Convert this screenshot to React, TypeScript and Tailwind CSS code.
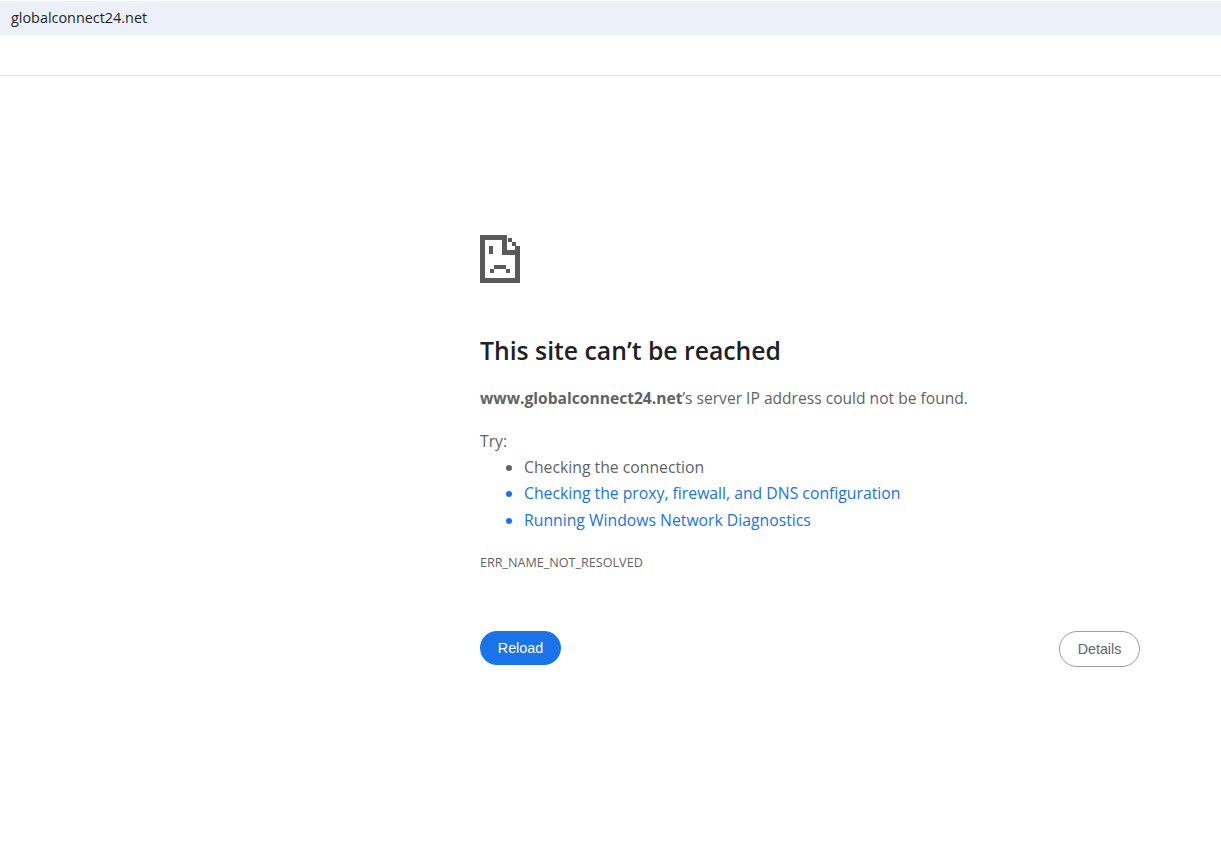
export default function App() {
  return (
    <div className="min-h-[850px] bg-white font-['Open_Sans',sans-serif] text-[#5f6368]">
      <div className="pt-px">
        <div className="h-[34px] bg-[#ecf0f9] pl-[11px] text-[14.4px] leading-[34px] text-[#1f1f1f]">
          globalconnect24.net
        </div>
      </div>
      <div className="h-[41px] border-b border-[#e3e3e3]" />

      <main className="ml-[480px] w-[660px] pt-[159px]">
        <svg width="40" height="48" viewBox="0 0 40 48" shapeRendering="crispEdges" className="block">
          <path
            fill="#5a5a5a"
            d="M0 0h27v5H0zM0 0h5v48H0zM0 43h40v5H0zM35 11h5v37h-5zM22 0h5v20h-5zM22 15h18v5H22zM28 3h4v4h-4zM32 7h4v4h-4zM9 11h4v8H9zM14 30h12v4H14zM10 34h4v4h-4zM26 34h4v4h-4z"
          />
        </svg>

        <h1 className="mt-[50px] text-[24.75px] leading-[36px] font-semibold text-[#202124]">This site can’t be reached</h1>
        <p className="mt-[17px] text-[15.6px] leading-[24px]">
          <span className="font-bold">www.globalconnect24.net</span>’s server IP address could not be found.
        </p>
        <p className="mt-[19px] text-[15.75px] leading-[24px]">Try:</p>
        <ul className="mt-[0.75px] list-disc pl-[44px] text-[15.75px] leading-[26.5px]">
          <li>Checking the connection</li>
          <li className="text-[#1a73e8]">Checking the proxy, firewall, and DNS configuration</li>
          <li className="text-[#1a73e8]">Running Windows Network Diagnostics</li>
        </ul>
        <div className="mt-[20.25px] text-[12.6px] leading-[18px]">ERR_NAME_NOT_RESOLVED</div>

        <div className="mt-[59px] flex items-start justify-between font-['Liberation_Sans',sans-serif] text-[14.3px]">
          <button className="h-[34px] w-[81px] rounded-full bg-[#1a73e8] pt-[2px] text-white">Reload</button>
          <button className="h-[36px] w-[81px] rounded-full border border-[#9a9ca0] pt-[2px] text-[#5f6368]">Details</button>
        </div>
      </main>
    </div>
  );
}
